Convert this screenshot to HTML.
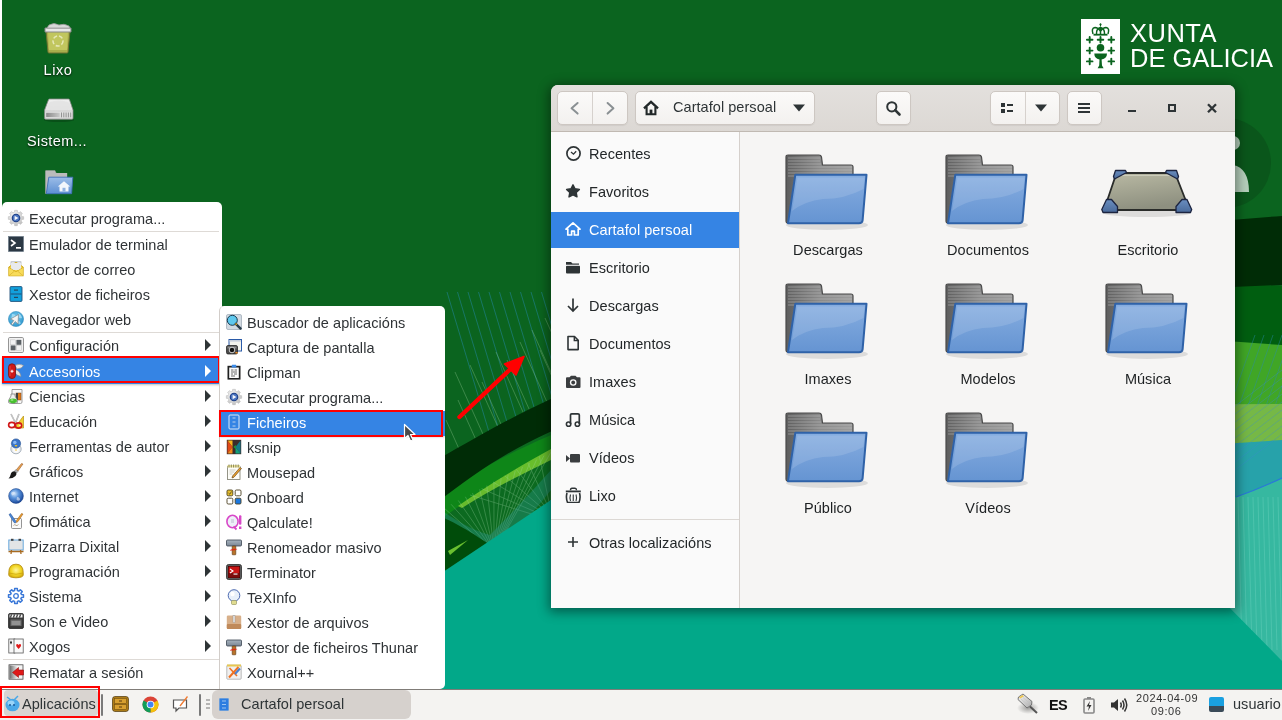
<!DOCTYPE html><html><head><meta charset="utf-8"><style>
*{margin:0;padding:0;box-sizing:border-box}
html,body{width:1282px;height:720px;overflow:hidden;background:#0b641f;font-family:"Liberation Sans",sans-serif}
#root{position:absolute;left:0;top:0;width:1282px;height:720px;overflow:hidden;will-change:transform}
.a{position:absolute}
.t{position:absolute;white-space:nowrap;font-size:14.5px;letter-spacing:0.05px;line-height:16px}
.menu{position:absolute;background:#fff;border:1px solid #cfcac5;border-radius:5px}
.ic{position:absolute;width:16px;height:16px;overflow:visible}
.mt{position:absolute;white-space:nowrap;font-size:14.5px;letter-spacing:0.05px;line-height:16px;color:#2f3336}
.arr{position:absolute;width:0;height:0;border-top:6px solid transparent;border-bottom:6px solid transparent;border-left:6px solid #2e3436}
.sep{position:absolute;height:1px;background:#dedad6}
#win{left:551px;top:85px;width:684px;height:523px;background:#f6f5f4;border-radius:7px 7px 0 0;box-shadow:0 2px 12px 2px rgba(0,0,0,.45)}
#hdr{left:0;top:0;width:684px;height:47px;background:linear-gradient(#e3e0dd,#dcd8d4);border-bottom:1px solid #c0b9b2;border-radius:7px 7px 0 0}
.btn{position:absolute;top:6px;height:34px;background:linear-gradient(#fbfaf9,#f3f1ef);border:1px solid #cdc7c2;border-radius:5px;box-shadow:0 1px 1px rgba(0,0,0,.06)}
#side{left:0;top:47px;width:189px;height:476px;background:#fafafa;border-right:1px solid #d5d0cc}
.st{position:absolute;left:38px;white-space:nowrap;font-size:14.5px;letter-spacing:0.05px;line-height:16px;color:#232729}
.lbl{position:absolute;width:160px;text-align:center;white-space:nowrap;font-size:14.5px;letter-spacing:0.05px;line-height:16px;color:#1d2022}
#task{left:0;top:689px;width:1282px;height:31px;background:#f4f3f1;border-top:1px solid #807c78}
.dl{position:absolute;width:100px;text-align:center;white-space:nowrap;font-size:14.5px;letter-spacing:0.05px;line-height:16px;color:#fff;text-shadow:0 1px 2px rgba(0,0,0,.9)}
</style></head><body><div id="root">
<svg class="a" style="left:0;top:0" width="1282" height="720" viewBox="0 0 1282 720">
<rect width="1282" height="720" fill="#0b641f"/>
<circle cx="1226" cy="163" r="45" fill="#0a561b"/>
<circle cx="1233" cy="143" r="7" fill="#b5cfbb"/>
<path d="M1214 192 Q1214 168 1233 165 Q1249 168 1249 192 Z" fill="#b5cfbb"/>
<!-- faint lines left -->
<g stroke="#1f8088" stroke-width="0.9" opacity="0.75" fill="none"><path d="M447.0 292 L500.4 470"/><path d="M457.5 292 L510.9 470"/><path d="M468.0 292 L521.4 470"/><path d="M478.5 292 L531.9 470"/><path d="M489.0 292 L542.4 470"/><path d="M499.5 292 L552.9 470"/><path d="M510.0 292 L563.4 470"/><path d="M520.5 292 L573.9 470"/><path d="M531.0 292 L584.4 470"/><path d="M541.5 292 L594.9 470"/><path d="M552.0 292 L605.4 470"/><path d="M562.5 292 L615.9 470"/></g>
<g stroke="#84be88" stroke-width="0.8" opacity="0.5" fill="none"><path d="M455.0 372 L503.6 480"/><path d="M470.0 365 L521.8 480"/><path d="M482.0 382 L526.1 480"/><path d="M496.0 352 L553.6 480"/><path d="M507.0 360 L561.0 480"/><path d="M520.0 342 L582.1 480"/><path d="M532.0 330 L599.5 480"/><path d="M545.0 318 L617.9 480"/><path d="M446.0 420 L473.0 480"/><path d="M458.0 400 L494.0 480"/><path d="M540.0 350 L598.5 480"/></g>
<!-- right strip layers -->
<path d="M1100 276 L1282 286 L1282 720 L1100 720Z" fill="#005e10"/>
<path d="M1100 332 L1282 345 L1282 720 L1100 720Z" fill="#40a626"/>
<g stroke="#2a8ab0" stroke-width="0.8" opacity="0.55"><path d="M1225 420 L1255 335"/><path d="M1234 420 L1264 335"/><path d="M1243 420 L1273 335"/><path d="M1252 420 L1282 335"/><path d="M1261 420 L1291 335"/><path d="M1270 420 L1300 335"/><path d="M1279 420 L1309 335"/></g>
<path d="M1100 405 L1282 404 L1282 720 L1100 720Z" fill="#76b846"/>
<path d="M1100 452 L1282 440 L1282 720 L1100 720Z" fill="#27a2aa"/>
<g stroke="#3a8ad0" stroke-width="0.7" opacity="0.5"><path d="M1230 410 L1282 370"/><path d="M1230 418 L1282 378"/><path d="M1230 426 L1282 386"/><path d="M1230 434 L1282 394"/><path d="M1230 442 L1282 402"/><path d="M1230 450 L1282 410"/><path d="M1230 458 L1282 418"/><path d="M1230 466 L1282 426"/><path d="M1230 474 L1282 434"/></g>
<path d="M1100 505 L1236 497 C1250 492 1265 486 1282 478 L1282 720 L1100 720Z" fill="#36b8a0"/>
<path d="M1236 497 C1250 492 1265 486 1282 478" stroke="#2a78d8" stroke-width="1.2" fill="none"/>
<g stroke="#6ad0bc" stroke-width="0.8" opacity="0.55"><path d="M1238 497 L1242 650"/><path d="M1243 497 L1247 650"/><path d="M1248 497 L1252 650"/><path d="M1253 497 L1257 650"/><path d="M1258 497 L1262 650"/><path d="M1263 497 L1267 650"/><path d="M1268 497 L1272 650"/><path d="M1273 497 L1277 650"/><path d="M1278 497 L1282 650"/></g>
<!-- left lower layers -->
<path d="M440 470 C520 440 600 415 700 390 L700 720 L440 720Z" fill="#0c6a20"/>
<path d="M440 495 C480 468 520 446 600 415 L600 440 C520 470 480 490 440 520Z" fill="#0e8618"/>
<path d="M551 449 L551 460 C520 475 490 490 462 508 L458 506 C490 484 520 466 551 449Z" fill="#78c830" opacity="0.85"/>
<g stroke="#a0d8a8" stroke-width="0.7" opacity="0.4" fill="none"><path d="M444.0 508.0 L494 552"/><path d="M451.1 504.3 L494 552"/><path d="M458.3 500.5 L494 552"/><path d="M465.4 496.8 L494 552"/><path d="M472.5 493.1 L494 552"/><path d="M479.7 489.3 L494 552"/><path d="M486.8 485.6 L494 552"/><path d="M493.9 481.9 L494 552"/><path d="M501.1 478.1 L494 552"/><path d="M508.2 474.4 L494 552"/><path d="M515.3 470.7 L494 552"/><path d="M522.5 466.9 L494 552"/><path d="M529.6 463.2 L494 552"/><path d="M536.7 459.5 L494 552"/><path d="M543.9 455.7 L494 552"/><path d="M551.0 452.0 L494 552"/><path d="M470.0 495.0 L551 520.0"/><path d="M481.6 488.6 L551 518.6"/><path d="M493.1 482.1 L551 517.1"/><path d="M504.7 475.7 L551 515.7"/><path d="M516.3 469.3 L551 514.3"/><path d="M527.9 462.9 L551 512.9"/><path d="M539.4 456.4 L551 511.4"/><path d="M551.0 450.0 L551 510.0"/></g>
<path d="M444 526 Q475 545 492 549 Q520 530 551 490 L551 470 Q520 505 490 535 Q470 530 444 512Z" fill="#2a9a98" opacity="0.35"/><g stroke="#2a90c8" stroke-width="0.8" opacity="0.7" fill="none"><path d="M444 530 Q480 552 494 551 Q525 528 551 500"/></g>
<path d="M444 518 C470 530 490 545 500 552 L444 574Z" fill="#004c0a"/>
<path d="M448 551 L468 540 L450 555Z" fill="#6ac030"/>
<!-- dark band -->
<path d="M440 458 C480 436 520 410 600 378 C800 305 1000 235 1282 216 L1282 285 C1000 295 800 345 600 412 C520 440 480 470 440 500 Z" fill="#002c06"/>
<!-- teal -->
<path d="M440 574 L551 500 L551 600 L1222 600 L1282 661 L1282 720 L440 720 Z" fill="#02a889"/>
</svg>
<div class="a" style="left:0;top:0;width:2px;height:720px;background:#fff"></div>
<svg class="a" style="left:42px;top:22px" width="32" height="32" viewBox="0 0 32 32">
<path d="M4 9 L28 9 L26 30 Q26 31 25 31 L7 31 Q6 31 6 30 Z" fill="#a9ae4c" stroke="#6f7330" stroke-width="1"/>
<path d="M6 10 L26 10 L25 28 L7 28Z" fill="#c1c65e"/>
<path d="M3 6 L29 6 L29 10 L3 10 Z" fill="#e8e8e8" stroke="#888" stroke-width="1"/>
<path d="M7 3 Q12 0 17 3 Q22 1 27 4 L28 6 L5 6Z" fill="#d8d8d8" stroke="#999" stroke-width=".8"/>
<circle cx="16" cy="19" r="5" fill="none" stroke="#e6e8b8" stroke-width="1.5" stroke-dasharray="4 2"/>
</svg>
<div class="dl" style="left:8px;top:62px;letter-spacing:0.6px">Lixo</div>
<svg class="a" style="left:42px;top:96px" width="32" height="32" viewBox="0 0 32 32">
<defs><linearGradient id="dvg" x1="0" y1="0" x2="0" y2="1"><stop offset="0" stop-color="#f0f0f0"/><stop offset="1" stop-color="#d8d8d8"/></linearGradient><linearGradient id="dvs" x1="0" y1="0" x2="1" y2="0"><stop offset="0" stop-color="#8a8a8a"/><stop offset="1" stop-color="#c8c8c8"/></linearGradient></defs>
<ellipse cx="17" cy="24" rx="15" ry="2" fill="rgba(0,0,0,.2)"/>
<path d="M7.5 3 L26.5 3 Q27.3 3 27.6 4 L31 14 L31 22.2 Q31 23.2 30 23.2 L3.6 23.2 Q2.6 23.2 2.6 22.2 L2.6 14 L6.4 4 Q6.7 3 7.5 3Z" fill="url(#dvg)" stroke="#8a8a8a" stroke-width=".8"/>
<ellipse cx="17" cy="10" rx="12" ry="5.5" fill="#e2e2e2" opacity=".8"/>
<path d="M3 15 H30.6" stroke="#c8c8c8" stroke-width=".8"/>
<rect x="4.2" y="16.8" width="13.5" height="4.2" fill="url(#dvs)"/>
<path d="M19.5 16.5 v4.8 M21.8 16.5 v4.8 M24.1 16.5 v4.8 M26.4 16.5 v4.8 M28.7 16.5 v4.8" stroke="#8a8a8a" stroke-width=".9"/>
</svg>
<div class="dl" style="left:7px;top:133px;letter-spacing:0.4px">Sistem...</div>
<svg class="a" style="left:42px;top:168px" width="32" height="32" viewBox="0 0 32 32">
<defs><linearGradient id="hf" x1="0" y1="0" x2="0" y2="1"><stop offset="0" stop-color="#9cbde8"/><stop offset="1" stop-color="#5d8fd2"/></linearGradient></defs>
<path d="M3.2 3 Q3.2 2.3 4 2.3 L13 2.3 L14.5 5 L25.2 5 L25.2 10 L5 25.7 L3.2 25.7Z" fill="#a8a8a8"/>
<path d="M4 4 h9 M4 6 h21 M4 8 h21 M4 10 h21 M4 12 h2 M4 14 h2 M4 16 h2 M4 18 h2 M4 20 h2 M4 22 h2" stroke="#d8d8d8" stroke-width=".8"/>
<path d="M6.8 9.2 L30.8 9.2 L29.6 25.7 L4.3 25.7Z" fill="url(#hf)" stroke="#3f6fb8" stroke-width=".9"/>
<path d="M22 13.2 L15.8 18.5 L17.5 18.5 L17.5 23.5 L26.5 23.5 L26.5 18.5 L28.2 18.5Z" fill="#f2f6fc"/>
<rect x="20.5" y="19.8" width="3" height="3.7" fill="#8fb2e0"/>
</svg>
<svg class="a" style="left:1081px;top:19px" width="39" height="55" viewBox="0 0 39 55">
<rect width="39" height="55" fill="#ffffff"/>
<g fill="none" stroke="#0b641f" stroke-width="1.5">
<path d="M12 15 Q10 9 14 8.5 Q17 8.5 19.5 12 Q22 8.5 25 8.5 Q29 9 27 15"/>
<path d="M15.5 15 Q15 10 19.5 8.5 Q24 10 23.5 15 M19.5 8.5 V15"/>
</g>
<rect x="12.5" y="14.8" width="14" height="1.8" fill="#0b641f"/>
<circle cx="19.5" cy="5.5" r="1.1" fill="#0b641f"/><path d="M19.5 4.5 V7.5" stroke="#0b641f" stroke-width="1"/>
<path d="M5.9 20.8 h5.6 M8.7 18.0 v5.6" stroke="#0b641f" stroke-width="1.9" stroke-linecap="round"/><path d="M16.7 20.8 h5.6 M19.5 18.0 v5.6" stroke="#0b641f" stroke-width="1.9" stroke-linecap="round"/><path d="M27.5 20.8 h5.6 M30.3 18.0 v5.6" stroke="#0b641f" stroke-width="1.9" stroke-linecap="round"/><path d="M5.9 31.6 h5.6 M8.7 28.8 v5.6" stroke="#0b641f" stroke-width="1.9" stroke-linecap="round"/><path d="M27.5 31.6 h5.6 M30.3 28.8 v5.6" stroke="#0b641f" stroke-width="1.9" stroke-linecap="round"/><path d="M5.9 42.4 h5.6 M8.7 39.6 v5.6" stroke="#0b641f" stroke-width="1.9" stroke-linecap="round"/><path d="M27.5 42.4 h5.6 M30.3 39.6 v5.6" stroke="#0b641f" stroke-width="1.9" stroke-linecap="round"/>
<circle cx="19.5" cy="28.7" r="3.8" fill="#0b641f"/>
<path d="M13.3 34.5 L26 34.5 Q26 39.5 20.6 40.5 L21 46.5 L22.6 49.3 L16.6 49.3 L18.2 46.5 L18.5 40.5 Q13.3 39.5 13.3 34.5Z" fill="#0b641f"/>
</svg>
<div class="a" style="left:1130px;top:19px;font-size:25.5px;line-height:28px;color:#fff;letter-spacing:0.5px;white-space:nowrap">XUNTA</div>
<div class="a" style="left:1130px;top:44px;font-size:25.5px;line-height:28px;color:#fff;letter-spacing:0px;white-space:nowrap">DE GALICIA</div>
<div id="win" class="a">
<div id="hdr" class="a"></div>
<div class="btn" style="left:6px;width:71px"></div>
<div class="a" style="left:41px;top:7px;width:1px;height:32px;background:#d6d1cd"></div>
<svg class="a" style="left:16px;top:15px" width="16" height="16" viewBox="0 0 16 16"><path d="M10.6 3 L4.6 8.3 L10.6 13.6" fill="none" stroke="#8a9093" stroke-width="2" stroke-linecap="round" stroke-linejoin="round"/></svg>
<svg class="a" style="left:51px;top:15px" width="16" height="16" viewBox="0 0 16 16"><path d="M5.6 3 L11.4 8.3 L5.6 13.6" fill="none" stroke="#8a9093" stroke-width="2" stroke-linecap="round" stroke-linejoin="round"/></svg>
<div class="btn" style="left:84px;width:180px"></div>
<svg class="a" style="left:92px;top:15px" width="16" height="16" viewBox="0 0 16 16"><path d="M1 8.3 L8 1.8 L15 8.3" fill="none" stroke="#222829" stroke-width="2.3" stroke-linejoin="miter"/><path d="M3.6 7 V14.2 H12.4 V7" fill="none" stroke="#222829" stroke-width="2.1"/><rect x="6.6" y="9.6" width="2.8" height="4.8" fill="#222829"/></svg>
<div class="t" style="left:122px;top:14px;color:#2e3436">Cartafol persoal</div>
<svg class="a" style="left:241px;top:18px" width="14" height="10" viewBox="0 0 14 10"><path d="M1 1.5 L13 1.5 L7 8.5Z" fill="#2e3436"/></svg>
<div class="btn" style="left:325px;width:35px"></div>
<svg class="a" style="left:334px;top:15px" width="17" height="17" viewBox="0 0 17 17"><circle cx="6.8" cy="6.8" r="4.6" fill="none" stroke="#2e3436" stroke-width="2"/><path d="M10.2 10.2 L14.5 14.5" stroke="#2e3436" stroke-width="2.6" stroke-linecap="round"/></svg>
<div class="btn" style="left:439px;width:70px"></div>
<div class="a" style="left:474px;top:7px;width:1px;height:32px;background:#d6d1cd"></div>
<svg class="a" style="left:448px;top:15px" width="16" height="16" viewBox="0 0 16 16"><rect x="2" y="3" width="4" height="4" fill="#2e3436"/><rect x="2" y="9" width="4" height="4" fill="#2e3436"/><rect x="8" y="4" width="6" height="2" fill="#2e3436"/><rect x="8" y="10" width="6" height="2" fill="#2e3436"/></svg>
<svg class="a" style="left:483px;top:18px" width="14" height="10" viewBox="0 0 14 10"><path d="M1 1.5 L13 1.5 L7 8.5Z" fill="#2e3436"/></svg>
<div class="btn" style="left:516px;width:35px"></div>
<svg class="a" style="left:525px;top:15px" width="16" height="16" viewBox="0 0 16 16"><rect x="2" y="3" width="12" height="2" fill="#2e3436"/><rect x="2" y="7" width="12" height="2" fill="#2e3436"/><rect x="2" y="11" width="12" height="2" fill="#2e3436"/></svg>
<div class="a" style="left:577px;top:25px;width:8px;height:2px;background:#2e3436"></div>
<div class="a" style="left:617px;top:19px;width:8px;height:8px;border:2px solid #2e3436"></div>
<svg class="a" style="left:654px;top:16px" width="14" height="14" viewBox="0 0 14 14"><path d="M3 3.2 L11 11.2 M11 3.2 L3 11.2" stroke="#2e3436" stroke-width="2.3"/></svg>
<div id="side" class="a"></div>
<svg class="a" style="left:14px;top:60px" width="16" height="16" viewBox="0 0 16 16"><circle cx="8.5" cy="8.5" r="6.6" fill="none" stroke="#2e3436" stroke-width="1.7"/><path d="M6 7 L8.5 9.2 L11.2 6.2" fill="none" stroke="#2e3436" stroke-width="1.3"/></svg>
<div class="st" style="top:61px;color:#232729">Recentes</div>
<svg class="a" style="left:14px;top:98px" width="16" height="16" viewBox="0 0 16 16"><path d="M8 1.8 L10 5.8 L14.4 6.4 L11.2 9.5 L12 13.9 L8 11.8 L4 13.9 L4.8 9.5 L1.6 6.4 L6 5.8Z" fill="#2e3436" stroke="#2e3436" stroke-width="1.4" stroke-linejoin="round"/></svg>
<div class="st" style="top:99px;color:#232729">Favoritos</div>
<div class="a" style="left:0;top:127px;width:188px;height:36px;background:#3584e4"></div>
<svg class="a" style="left:14px;top:136px" width="16" height="16" viewBox="0 0 16 16"><path d="M8 1.8 L1 8.2 L2.8 8.2 L2.8 14 L6.6 14 L6.6 10.2 L9.4 10.2 L9.4 14 L13.2 14 L13.2 8.2 L15 8.2 Z" fill="none" stroke="#fff" stroke-width="1.7" stroke-linejoin="round"/></svg>
<div class="st" style="top:137px;color:#ffffff">Cartafol persoal</div>
<svg class="a" style="left:14px;top:174px" width="16" height="16" viewBox="0 0 16 16"><path d="M1 3 L6 3 L7.5 4.5 L14 4.5 L14 6 L1 6Z" fill="#2e3436"/><rect x="1" y="6.5" width="14" height="8" rx="1" fill="#2e3436"/><path d="M1 6.2 L15 6.2" stroke="#fafafa" stroke-width=".9"/></svg>
<div class="st" style="top:175px;color:#232729">Escritorio</div>
<svg class="a" style="left:14px;top:212px" width="16" height="16" viewBox="0 0 16 16"><path d="M8 1.5 L8 14 M3 9 L8 14 L13 9" fill="none" stroke="#2e3436" stroke-width="1.7"/></svg>
<div class="st" style="top:213px;color:#232729">Descargas</div>
<svg class="a" style="left:14px;top:250px" width="16" height="16" viewBox="0 0 16 16"><path d="M3 1.5 L9.5 1.5 L13.2 5.2 L13.2 14.6 L3 14.6Z" fill="none" stroke="#2e3436" stroke-width="1.6" stroke-linejoin="round"/><path d="M9.3 1.5 L9.3 5.5 L13.2 5.5" fill="none" stroke="#2e3436" stroke-width="1.4"/></svg>
<div class="st" style="top:251px;color:#232729">Documentos</div>
<svg class="a" style="left:14px;top:288px" width="16" height="16" viewBox="0 0 16 16"><path d="M1 5.2 Q1 4.2 2 4.2 L4.5 4.2 L6 2.8 L10.5 2.8 L12 4.2 L14.5 4.2 Q15.5 4.2 15.5 5.2 L15.5 14 Q15.5 15 14.5 15 L2 15 Q1 15 1 14Z" fill="#3a3d3f"/><circle cx="8.2" cy="9.5" r="3.3" fill="#fafafa"/><circle cx="8.2" cy="9.5" r="1.9" fill="#3a3d3f"/></svg>
<div class="st" style="top:289px;color:#232729">Imaxes</div>
<svg class="a" style="left:14px;top:326px" width="16" height="16" viewBox="0 0 16 16"><path d="M5.5 13 L5.5 4 Q5.5 2.8 6.8 2.8 L13 2.8 Q14.3 2.8 14.3 4 L14.3 13" fill="none" stroke="#2e3436" stroke-width="1.7"/><circle cx="3.6" cy="13.2" r="2.2" fill="none" stroke="#2e3436" stroke-width="1.6"/><circle cx="12.4" cy="13.2" r="2.2" fill="none" stroke="#2e3436" stroke-width="1.6"/></svg>
<div class="st" style="top:327px;color:#232729">Música</div>
<svg class="a" style="left:14px;top:364px" width="16" height="16" viewBox="0 0 16 16"><path d="M1 5.9 L5 9.5 L1 13.1Z" fill="#3a3d3f"/><rect x="5" y="5" width="10" height="8.6" rx="1" fill="#3a3d3f"/></svg>
<div class="st" style="top:365px;color:#232729">Vídeos</div>
<svg class="a" style="left:14px;top:402px" width="16" height="16" viewBox="0 0 16 16"><path d="M5.5 3.2 Q5.5 1.3 7 1.3 L10 1.3 Q11.5 1.3 11.5 3.2" fill="none" stroke="#2e3436" stroke-width="1.4"/><rect x="0.8" y="3.5" width="15" height="1.8" fill="#2e3436"/><path d="M2 6 Q0.6 11 2.6 15.6 L13.9 15.6 Q15.9 11 14.5 6" fill="none" stroke="#2e3436" stroke-width="1.6"/><path d="M5.5 7.5 Q4.5 10.5 5.5 14 M8.25 7.5 V14 M11 7.5 Q12 10.5 11 14" fill="none" stroke="#2e3436" stroke-width="1.1"/></svg>
<div class="st" style="top:403px;color:#232729">Lixo</div>
<div class="a" style="left:0;top:434px;width:188px;height:1px;background:#dcd8d4"></div>
<svg class="a" style="left:14px;top:449px" width="16" height="16" viewBox="0 0 16 16"><path d="M8 3 L8 13 M3 8 L13 8" stroke="#2e3436" stroke-width="1.6"/></svg>
<div class="st" style="top:450px">Otras localizacións</div>
<svg class="a" style="left:232px;top:68px" width="90" height="82" viewBox="0 0 90 82"><defs><linearGradient id="fg232_68" x1="0" y1="0" x2="0" y2="1"><stop offset="0" stop-color="#86ade0"/><stop offset="1" stop-color="#6594d2"/></linearGradient><linearGradient id="bg232_68" x1="0" y1="0" x2="1" y2="0"><stop offset="0" stop-color="#5e5e5e"/><stop offset="0.5" stop-color="#8a8a8a"/><stop offset="1" stop-color="#9c9c9c"/></linearGradient></defs><ellipse cx="44" cy="72" rx="41" ry="5" fill="rgba(0,0,0,0.10)"/><path d="M3 4 Q3 2 5 2 L36 2 Q38 2 38.5 4 L39.5 12 L68 12 Q70 12 70 14 L70 25 L10 70 L5 70 Q3 70 3 68Z" fill="url(#bg232_68)" stroke="#4a4a4a" stroke-width="1.2"/><path d="M5 5 h32 M5 8 h32 M5 11 h33 M5 14 h64 M5 17 h64 M5 20 h64 M5 23 h64" stroke="#c4c4c4" stroke-width=".9" opacity=".55"/><path d="M12.3 21.8 L83.5 21.8 L79.6 67.3 Q79.2 70.2 76 70.2 L5 70.2 Z" fill="url(#fg232_68)" stroke="#2f62a8" stroke-width="2" stroke-linejoin="round"/><path d="M14.5 24.5 L81.5 24.5 L80.5 36 Q62 46 40 46 Q22 48 9 58Z" fill="#ffffff" opacity=".13"/></svg>
<div class="lbl" style="left:197px;top:157px">Descargas</div>
<svg class="a" style="left:392px;top:68px" width="90" height="82" viewBox="0 0 90 82"><defs><linearGradient id="fg392_68" x1="0" y1="0" x2="0" y2="1"><stop offset="0" stop-color="#86ade0"/><stop offset="1" stop-color="#6594d2"/></linearGradient><linearGradient id="bg392_68" x1="0" y1="0" x2="1" y2="0"><stop offset="0" stop-color="#5e5e5e"/><stop offset="0.5" stop-color="#8a8a8a"/><stop offset="1" stop-color="#9c9c9c"/></linearGradient></defs><ellipse cx="44" cy="72" rx="41" ry="5" fill="rgba(0,0,0,0.10)"/><path d="M3 4 Q3 2 5 2 L36 2 Q38 2 38.5 4 L39.5 12 L68 12 Q70 12 70 14 L70 25 L10 70 L5 70 Q3 70 3 68Z" fill="url(#bg392_68)" stroke="#4a4a4a" stroke-width="1.2"/><path d="M5 5 h32 M5 8 h32 M5 11 h33 M5 14 h64 M5 17 h64 M5 20 h64 M5 23 h64" stroke="#c4c4c4" stroke-width=".9" opacity=".55"/><path d="M12.3 21.8 L83.5 21.8 L79.6 67.3 Q79.2 70.2 76 70.2 L5 70.2 Z" fill="url(#fg392_68)" stroke="#2f62a8" stroke-width="2" stroke-linejoin="round"/><path d="M14.5 24.5 L81.5 24.5 L80.5 36 Q62 46 40 46 Q22 48 9 58Z" fill="#ffffff" opacity=".13"/></svg>
<div class="lbl" style="left:357px;top:157px">Documentos</div>
<svg class="a" style="left:550px;top:84px" width="92" height="50" viewBox="0 0 92 50">
<defs><linearGradient id="dg" x1="0" y1="0" x2="0.3" y2="1"><stop offset="0" stop-color="#babaa4"/><stop offset="1" stop-color="#8e9080"/></linearGradient>
<linearGradient id="cg" x1="0" y1="0" x2="0" y2="1"><stop offset="0" stop-color="#6a8ec0"/><stop offset="1" stop-color="#4a6a9a"/></linearGradient></defs>
<ellipse cx="46" cy="44" rx="44" ry="4" fill="rgba(0,0,0,.10)"/>
<path d="M15.5 4 L74 4 L88.5 41 L3 41Z" fill="url(#dg)" stroke="#2a2c2a" stroke-width="1.8" stroke-linejoin="round"/>
<path d="M17 6.5 L72.5 6.5" stroke="#d8d8c8" stroke-width="1" opacity=".7"/>
<path d="M14.5 1.5 L24.5 1.5 L25.5 3.5 L13.5 10 L12.5 7.5Z" fill="url(#cg)" stroke="#1c2440" stroke-width="1.3" stroke-linejoin="round"/>
<path d="M75.5 1.5 L65.5 1.5 L64.5 3.5 L76.5 10 L77.5 7.5Z" fill="url(#cg)" stroke="#1c2440" stroke-width="1.3" stroke-linejoin="round"/>
<path d="M2 43.5 L16.5 43.5 L16.5 37.5 L10.5 30.5 L5.5 30.5 L0.8 40.5Z" fill="url(#cg)" stroke="#1c2440" stroke-width="1.3" stroke-linejoin="round"/>
<path d="M89.5 43.5 L75 43.5 L75 37.5 L81 30.5 L86 30.5 L90.7 40.5Z" fill="url(#cg)" stroke="#1c2440" stroke-width="1.3" stroke-linejoin="round"/>
</svg>
<div class="lbl" style="left:517px;top:157px">Escritorio</div>
<svg class="a" style="left:232px;top:197px" width="90" height="82" viewBox="0 0 90 82"><defs><linearGradient id="fg232_197" x1="0" y1="0" x2="0" y2="1"><stop offset="0" stop-color="#86ade0"/><stop offset="1" stop-color="#6594d2"/></linearGradient><linearGradient id="bg232_197" x1="0" y1="0" x2="1" y2="0"><stop offset="0" stop-color="#5e5e5e"/><stop offset="0.5" stop-color="#8a8a8a"/><stop offset="1" stop-color="#9c9c9c"/></linearGradient></defs><ellipse cx="44" cy="72" rx="41" ry="5" fill="rgba(0,0,0,0.10)"/><path d="M3 4 Q3 2 5 2 L36 2 Q38 2 38.5 4 L39.5 12 L68 12 Q70 12 70 14 L70 25 L10 70 L5 70 Q3 70 3 68Z" fill="url(#bg232_197)" stroke="#4a4a4a" stroke-width="1.2"/><path d="M5 5 h32 M5 8 h32 M5 11 h33 M5 14 h64 M5 17 h64 M5 20 h64 M5 23 h64" stroke="#c4c4c4" stroke-width=".9" opacity=".55"/><path d="M12.3 21.8 L83.5 21.8 L79.6 67.3 Q79.2 70.2 76 70.2 L5 70.2 Z" fill="url(#fg232_197)" stroke="#2f62a8" stroke-width="2" stroke-linejoin="round"/><path d="M14.5 24.5 L81.5 24.5 L80.5 36 Q62 46 40 46 Q22 48 9 58Z" fill="#ffffff" opacity=".13"/></svg>
<div class="lbl" style="left:197px;top:286px">Imaxes</div>
<svg class="a" style="left:392px;top:197px" width="90" height="82" viewBox="0 0 90 82"><defs><linearGradient id="fg392_197" x1="0" y1="0" x2="0" y2="1"><stop offset="0" stop-color="#86ade0"/><stop offset="1" stop-color="#6594d2"/></linearGradient><linearGradient id="bg392_197" x1="0" y1="0" x2="1" y2="0"><stop offset="0" stop-color="#5e5e5e"/><stop offset="0.5" stop-color="#8a8a8a"/><stop offset="1" stop-color="#9c9c9c"/></linearGradient></defs><ellipse cx="44" cy="72" rx="41" ry="5" fill="rgba(0,0,0,0.10)"/><path d="M3 4 Q3 2 5 2 L36 2 Q38 2 38.5 4 L39.5 12 L68 12 Q70 12 70 14 L70 25 L10 70 L5 70 Q3 70 3 68Z" fill="url(#bg392_197)" stroke="#4a4a4a" stroke-width="1.2"/><path d="M5 5 h32 M5 8 h32 M5 11 h33 M5 14 h64 M5 17 h64 M5 20 h64 M5 23 h64" stroke="#c4c4c4" stroke-width=".9" opacity=".55"/><path d="M12.3 21.8 L83.5 21.8 L79.6 67.3 Q79.2 70.2 76 70.2 L5 70.2 Z" fill="url(#fg392_197)" stroke="#2f62a8" stroke-width="2" stroke-linejoin="round"/><path d="M14.5 24.5 L81.5 24.5 L80.5 36 Q62 46 40 46 Q22 48 9 58Z" fill="#ffffff" opacity=".13"/></svg>
<div class="lbl" style="left:357px;top:286px">Modelos</div>
<svg class="a" style="left:552px;top:197px" width="90" height="82" viewBox="0 0 90 82"><defs><linearGradient id="fg552_197" x1="0" y1="0" x2="0" y2="1"><stop offset="0" stop-color="#86ade0"/><stop offset="1" stop-color="#6594d2"/></linearGradient><linearGradient id="bg552_197" x1="0" y1="0" x2="1" y2="0"><stop offset="0" stop-color="#5e5e5e"/><stop offset="0.5" stop-color="#8a8a8a"/><stop offset="1" stop-color="#9c9c9c"/></linearGradient></defs><ellipse cx="44" cy="72" rx="41" ry="5" fill="rgba(0,0,0,0.10)"/><path d="M3 4 Q3 2 5 2 L36 2 Q38 2 38.5 4 L39.5 12 L68 12 Q70 12 70 14 L70 25 L10 70 L5 70 Q3 70 3 68Z" fill="url(#bg552_197)" stroke="#4a4a4a" stroke-width="1.2"/><path d="M5 5 h32 M5 8 h32 M5 11 h33 M5 14 h64 M5 17 h64 M5 20 h64 M5 23 h64" stroke="#c4c4c4" stroke-width=".9" opacity=".55"/><path d="M12.3 21.8 L83.5 21.8 L79.6 67.3 Q79.2 70.2 76 70.2 L5 70.2 Z" fill="url(#fg552_197)" stroke="#2f62a8" stroke-width="2" stroke-linejoin="round"/><path d="M14.5 24.5 L81.5 24.5 L80.5 36 Q62 46 40 46 Q22 48 9 58Z" fill="#ffffff" opacity=".13"/></svg>
<div class="lbl" style="left:517px;top:286px">Música</div>
<svg class="a" style="left:232px;top:326px" width="90" height="82" viewBox="0 0 90 82"><defs><linearGradient id="fg232_326" x1="0" y1="0" x2="0" y2="1"><stop offset="0" stop-color="#86ade0"/><stop offset="1" stop-color="#6594d2"/></linearGradient><linearGradient id="bg232_326" x1="0" y1="0" x2="1" y2="0"><stop offset="0" stop-color="#5e5e5e"/><stop offset="0.5" stop-color="#8a8a8a"/><stop offset="1" stop-color="#9c9c9c"/></linearGradient></defs><ellipse cx="44" cy="72" rx="41" ry="5" fill="rgba(0,0,0,0.10)"/><path d="M3 4 Q3 2 5 2 L36 2 Q38 2 38.5 4 L39.5 12 L68 12 Q70 12 70 14 L70 25 L10 70 L5 70 Q3 70 3 68Z" fill="url(#bg232_326)" stroke="#4a4a4a" stroke-width="1.2"/><path d="M5 5 h32 M5 8 h32 M5 11 h33 M5 14 h64 M5 17 h64 M5 20 h64 M5 23 h64" stroke="#c4c4c4" stroke-width=".9" opacity=".55"/><path d="M12.3 21.8 L83.5 21.8 L79.6 67.3 Q79.2 70.2 76 70.2 L5 70.2 Z" fill="url(#fg232_326)" stroke="#2f62a8" stroke-width="2" stroke-linejoin="round"/><path d="M14.5 24.5 L81.5 24.5 L80.5 36 Q62 46 40 46 Q22 48 9 58Z" fill="#ffffff" opacity=".13"/></svg>
<div class="lbl" style="left:197px;top:415px">Público</div>
<svg class="a" style="left:392px;top:326px" width="90" height="82" viewBox="0 0 90 82"><defs><linearGradient id="fg392_326" x1="0" y1="0" x2="0" y2="1"><stop offset="0" stop-color="#86ade0"/><stop offset="1" stop-color="#6594d2"/></linearGradient><linearGradient id="bg392_326" x1="0" y1="0" x2="1" y2="0"><stop offset="0" stop-color="#5e5e5e"/><stop offset="0.5" stop-color="#8a8a8a"/><stop offset="1" stop-color="#9c9c9c"/></linearGradient></defs><ellipse cx="44" cy="72" rx="41" ry="5" fill="rgba(0,0,0,0.10)"/><path d="M3 4 Q3 2 5 2 L36 2 Q38 2 38.5 4 L39.5 12 L68 12 Q70 12 70 14 L70 25 L10 70 L5 70 Q3 70 3 68Z" fill="url(#bg392_326)" stroke="#4a4a4a" stroke-width="1.2"/><path d="M5 5 h32 M5 8 h32 M5 11 h33 M5 14 h64 M5 17 h64 M5 20 h64 M5 23 h64" stroke="#c4c4c4" stroke-width=".9" opacity=".55"/><path d="M12.3 21.8 L83.5 21.8 L79.6 67.3 Q79.2 70.2 76 70.2 L5 70.2 Z" fill="url(#fg392_326)" stroke="#2f62a8" stroke-width="2" stroke-linejoin="round"/><path d="M14.5 24.5 L81.5 24.5 L80.5 36 Q62 46 40 46 Q22 48 9 58Z" fill="#ffffff" opacity=".13"/></svg>
<div class="lbl" style="left:357px;top:415px">Vídeos</div>
</div>
<div class="menu" style="left:2px;top:202px;width:220px;height:487px;border:none;border-radius:5px 5px 0 0"></div>
<div class="sep" style="left:3px;top:231px;width:216px"></div>
<div class="sep" style="left:3px;top:332px;width:216px"></div>
<div class="sep" style="left:3px;top:659px;width:216px"></div>
<svg class="ic" style="left:8px;top:210px" viewBox="0 0 16 16"><defs><radialGradient id="rg1" cx=".4" cy=".35" r=".7"><stop offset="0" stop-color="#fafafa"/><stop offset="1" stop-color="#bdbdbd"/></radialGradient></defs><path d="M13.80 6.48 L15.68 6.63 L15.68 9.37 L13.80 9.52 L13.18 11.03 L14.40 12.46 L12.46 14.40 L11.03 13.18 L9.52 13.80 L9.37 15.68 L6.63 15.68 L6.48 13.80 L4.97 13.18 L3.54 14.40 L1.60 12.46 L2.82 11.03 L2.20 9.52 L0.32 9.37 L0.32 6.63 L2.20 6.48 L2.82 4.97 L1.60 3.54 L3.54 1.60 L4.97 2.82 L6.48 2.20 L6.63 0.32 L9.37 0.32 L9.52 2.20 L11.03 2.82 L12.46 1.60 L14.40 3.54 L13.18 4.97Z" fill="url(#rg1)" stroke="#b8b8b8" stroke-width=".5"/><circle cx="8" cy="8" r="4.3" fill="#1f3f86"/><circle cx="8" cy="8" r="3.2" fill="#4a74c0"/><path d="M6.6 5.8 L10.4 8 L6.6 10.2 Z" fill="#f4f6fa"/></svg>
<div class="mt" style="left:29px;top:211px;color:#2f3336">Executar programa...</div>
<svg class="ic" style="left:8px;top:236px" viewBox="0 0 16 16"><rect x="0.5" y="0.5" width="15" height="15" fill="#2b3844" stroke="#6c7a86" stroke-width=".7"/><path d="M3 4 L7 7 L3 10" fill="none" stroke="#fff" stroke-width="1.6"/><rect x="8" y="11" width="5" height="1.7" fill="#fff"/></svg>
<div class="mt" style="left:29px;top:237px;color:#2f3336">Emulador de terminal</div>
<svg class="ic" style="left:8px;top:261px" viewBox="0 0 16 16"><rect x="3" y="0.8" width="10" height="9" fill="#e8eaee" stroke="#9aa0a8" stroke-width=".6"/><path d="M0.8 6 L8 1.2 L15.2 6 L15.2 14.8 L0.8 14.8Z" fill="#f6d44a" stroke="#d0a818" stroke-width=".9" stroke-linejoin="round"/><rect x="3" y="2" width="10" height="7" fill="#e8eaee"/><path d="M0.8 6.5 L8 11 L15.2 6.5 M0.8 14.8 L6.5 9.8 M15.2 14.8 L9.5 9.8" fill="none" stroke="#d0a818" stroke-width=".9"/><path d="M1.2 7 L8 11.2 L14.8 7 L14.8 14.5 L1.2 14.5Z" fill="#f8dc5a"/><path d="M1.2 14.5 L6.5 10 M14.8 14.5 L9.5 10" stroke="#d8b030" stroke-width=".7"/></svg>
<div class="mt" style="left:29px;top:262px;color:#2f3336">Lector de correo</div>
<svg class="ic" style="left:8px;top:286px" viewBox="0 0 16 16"><rect x="2" y="0.6" width="12" height="14.8" rx="1" fill="#12a0dc" stroke="#1f4f78" stroke-width=".9"/><path d="M2.5 8 L13.5 8" stroke="#1f4f78" stroke-width="1"/><rect x="6" y="3.5" width="4" height="1.2" fill="#24485e"/><rect x="6" y="10.8" width="4" height="1.2" fill="#24485e"/></svg>
<div class="mt" style="left:29px;top:287px;color:#2f3336">Xestor de ficheiros</div>
<svg class="ic" style="left:8px;top:311px" viewBox="0 0 16 16"><defs><radialGradient id="rg2" cx=".45" cy=".4" r=".6"><stop offset="0" stop-color="#7fd0f2"/><stop offset="1" stop-color="#2e96cc"/></radialGradient></defs><circle cx="8" cy="8" r="7.6" fill="url(#rg2)" stroke="#2a86b8" stroke-width=".5"/><path d="M4 3 Q7 2.5 7.5 5 Q6 7.5 3.5 7Z M10 2 Q13.5 3.5 14 7 Q12 8 10.5 6Z M10 10 Q13 10 12.5 13 Q10.5 14 9.5 12Z" fill="#a8e0f8" opacity=".8"/><path d="M10.5 3.5 L10 13 L7.2 10.5 L4.5 14 L3.2 13 L5.8 9.5 L2.5 8Z" fill="#f4f4f4" stroke="#7a7a7a" stroke-width=".6" stroke-linejoin="round"/></svg>
<div class="mt" style="left:29px;top:312px;color:#2f3336">Navegador web</div>
<svg class="ic" style="left:8px;top:337px" viewBox="0 0 16 16"><rect x="0.6" y="0.6" width="14.8" height="14.8" rx="1" fill="#fdfdfd" stroke="#8a8a8a" stroke-width="1"/><rect x="2.6" y="2.8" width="5" height="5" fill="#f2f2f2" stroke="#c0c0c0" stroke-width=".6"/><rect x="8.4" y="2.8" width="5" height="5" fill="#5a6064"/><rect x="2.6" y="8.4" width="5" height="5" fill="#5a6064"/><rect x="8.4" y="8.4" width="5" height="5" fill="#f2f2f2" stroke="#c0c0c0" stroke-width=".6"/></svg>
<div class="mt" style="left:29px;top:338px;color:#2f3336">Configuración</div>
<div class="arr" style="left:205px;top:339px;border-left-color:#2e3436"></div>
<div class="a" style="left:2px;top:357px;width:219px;height:27px;background:#3584e4;box-shadow:0 1px 2px rgba(0,0,0,.25)"></div>
<svg class="ic" style="left:8px;top:363px" viewBox="0 0 16 16"><path d="M7 2.5 Q11 0 15.5 2.5 Q14 5.5 9 6 Z" fill="#ececec" stroke="#8a8a8a" stroke-width=".6"/><path d="M7 6.5 Q12 7.5 13 13.5 Q9.5 13 7 10Z" fill="#e4e4e4" stroke="#8a8a8a" stroke-width=".6"/><rect x="0.5" y="0.8" width="7" height="14.8" rx="3.5" fill="#d01818" stroke="#801010" stroke-width=".8"/><path d="M2.5 8.2 h3 M4 6.7 v3" stroke="#fff" stroke-width="1.1"/><path d="M2 3 L2 13" stroke="#f06060" stroke-width=".6"/></svg>
<div class="mt" style="left:29px;top:364px;color:#ffffff">Accesorios</div>
<div class="arr" style="left:205px;top:365px;border-left-color:#ffffff"></div>
<svg class="ic" style="left:8px;top:388px" viewBox="0 0 16 16"><path d="M4 1.5 L14 1.5 L14 14 Q14 15.5 12.5 15.5 L5.5 15.5 Q4 15.5 4 14Z" fill="#f4f4f4" fill-opacity=".6" stroke="#8a8a8a" stroke-width=".8"/><rect x="8" y="5" width="5" height="7" fill="#e07818" stroke="#7a4010" stroke-width=".5"/><rect x="8" y="5" width="2" height="7" fill="#404040"/><path d="M3 6 L7 6 L7 8 L9.5 12.5 Q10 15.5 7.5 15.5 L2.5 15.5 Q0 15.5 0.5 12.5 L3 8Z" fill="#f0f0f0" stroke="#707070" stroke-width=".7"/><ellipse cx="5" cy="12.8" rx="4" ry="2.4" fill="#48c030"/><ellipse cx="4" cy="12" rx="1.5" ry=".8" fill="#a8f090"/></svg>
<div class="mt" style="left:29px;top:389px;color:#2f3336">Ciencias</div>
<div class="arr" style="left:205px;top:390px;border-left-color:#2e3436"></div>
<svg class="ic" style="left:8px;top:413px" viewBox="0 0 16 16"><path d="M6.5 15 L15.5 15 L15.5 3 Z" fill="#f2d030" stroke="#b89010" stroke-width=".7"/><path d="M10.5 13 L13.5 13 L13.5 9.5Z" fill="#fff6b8"/><path d="M7.5 10 L3 1 M7.5 10 L11 1" stroke="#a8a8a8" stroke-width="1.6"/><path d="M7.5 10 L3 1 M7.5 10 L11 1" stroke="#e0e0e0" stroke-width=".6"/><ellipse cx="3.8" cy="12" rx="3.2" ry="2.6" fill="none" stroke="#d01818" stroke-width="1.6"/><ellipse cx="10.5" cy="12.5" rx="3.2" ry="2.6" fill="none" stroke="#d01818" stroke-width="1.6"/></svg>
<div class="mt" style="left:29px;top:414px;color:#2f3336">Educación</div>
<div class="arr" style="left:205px;top:415px;border-left-color:#2e3436"></div>
<svg class="ic" style="left:8px;top:438px" viewBox="0 0 16 16"><ellipse cx="8" cy="11" rx="5.2" ry="4.8" fill="#e8ecf0" stroke="#8a96a4" stroke-width=".7"/><ellipse cx="8" cy="11.5" rx="3" ry="3.5" fill="#fafafa"/><circle cx="8" cy="5.5" r="4.6" fill="#3a74c8" stroke="#1f4a8a" stroke-width=".6"/><circle cx="6.8" cy="4.5" r="1.8" fill="#8ab8f0"/><path d="M6.5 7 L9.5 7 L8 9Z" fill="#f0c020"/><circle cx="8" cy="12" r=".8" fill="#f0c020"/></svg>
<div class="mt" style="left:29px;top:439px;color:#2f3336">Ferramentas de autor</div>
<div class="arr" style="left:205px;top:440px;border-left-color:#2e3436"></div>
<svg class="ic" style="left:8px;top:463px" viewBox="0 0 16 16"><path d="M15 1 L13.5 0.5 L8.5 6.5 L10 8Z" fill="#e8a050" stroke="#8a5020" stroke-width=".5"/><path d="M8 6.5 L10 8.5 L8.5 10 L6.5 8Z" fill="#b0b0b0" stroke="#606060" stroke-width=".5"/><path d="M6.5 8.2 Q3 8.5 2.5 12 Q2 14 0.5 15.5 Q5 15.5 7.5 13 Q9 11 8.3 9.8Z" fill="#1a1a1a"/></svg>
<div class="mt" style="left:29px;top:464px;color:#2f3336">Gráficos</div>
<div class="arr" style="left:205px;top:465px;border-left-color:#2e3436"></div>
<svg class="ic" style="left:8px;top:488px" viewBox="0 0 16 16"><defs><radialGradient id="rg3" cx=".4" cy=".35" r=".65"><stop offset="0" stop-color="#cfe4fa"/><stop offset=".45" stop-color="#5a94dc"/><stop offset="1" stop-color="#1c4a9c"/></radialGradient></defs><circle cx="8" cy="8" r="7.4" fill="url(#rg3)" stroke="#1a3f80" stroke-width=".5"/><path d="M3 5 Q5 3 7 4.5 Q6 7 4 7.5Z M9 9 Q12 9 12 12 Q9.5 13.5 8.5 11.5Z" fill="#f4f8ff" opacity=".55"/></svg>
<div class="mt" style="left:29px;top:489px;color:#2f3336">Internet</div>
<div class="arr" style="left:205px;top:490px;border-left-color:#2e3436"></div>
<svg class="ic" style="left:8px;top:513px" viewBox="0 0 16 16"><rect x="3.5" y="5.5" width="10" height="10" rx="1" fill="#fafafa" stroke="#7a7a7a" stroke-width=".8"/><path d="M5.5 12.5 Q7 10.5 8 12.5 Q9 13 10.5 11.5" fill="none" stroke="#9a8a6a" stroke-width=".7"/><path d="M1 1.5 L2.5 0.5 L8 8.5 L7.5 10 L6 9.5Z" fill="#4a86d8" stroke="#1f4a8a" stroke-width=".5"/><path d="M15 1 L13.5 0.5 L8.5 7.5 L8.5 9.5 L10 8.5Z" fill="#f0a030" stroke="#8a5010" stroke-width=".5"/></svg>
<div class="mt" style="left:29px;top:514px;color:#2f3336">Ofimática</div>
<div class="arr" style="left:205px;top:515px;border-left-color:#2e3436"></div>
<svg class="ic" style="left:8px;top:538px" viewBox="0 0 16 16"><rect x="0.8" y="2" width="14.4" height="10" fill="#e2e4e6" stroke="#6aa8dc" stroke-width="1"/><rect x="3" y="0.8" width="2.5" height="2" fill="#404040"/><rect x="10.5" y="0.8" width="2.5" height="2" fill="#404040"/><path d="M0.5 13.5 L15.5 13.5 M3.5 12 L3 16 M12.5 12 L13 16" stroke="#a86a20" stroke-width="1.3"/></svg>
<div class="mt" style="left:29px;top:539px;color:#2f3336">Pizarra Dixital</div>
<div class="arr" style="left:205px;top:540px;border-left-color:#2e3436"></div>
<svg class="ic" style="left:8px;top:563px" viewBox="0 0 16 16"><defs><radialGradient id="rg4" cx=".5" cy=".45" r=".55"><stop offset="0" stop-color="#fff6a0"/><stop offset=".6" stop-color="#f2d828"/><stop offset="1" stop-color="#d8b010"/></radialGradient></defs><path d="M0.8 9.5 Q0.8 1.2 8 1.2 Q15.2 1.2 15.2 9.5 L15.2 12 Q15.2 14.5 8 14.8 Q0.8 14.5 0.8 12Z" fill="url(#rg4)" stroke="#b89010" stroke-width=".9"/><path d="M1 10 Q8 12.5 15 10" fill="none" stroke="#c8a010" stroke-width=".7"/></svg>
<div class="mt" style="left:29px;top:564px;color:#2f3336">Programación</div>
<div class="arr" style="left:205px;top:565px;border-left-color:#2e3436"></div>
<svg class="ic" style="left:8px;top:588px" viewBox="0 0 16 16"><path d="M13.42 6.58 L15.48 6.66 L15.48 9.34 L13.42 9.42 L12.84 10.82 L14.24 12.35 L12.35 14.24 L10.82 12.84 L9.42 13.42 L9.34 15.48 L6.66 15.48 L6.58 13.42 L5.18 12.84 L3.65 14.24 L1.76 12.35 L3.16 10.82 L2.58 9.42 L0.52 9.34 L0.52 6.66 L2.58 6.58 L3.16 5.18 L1.76 3.65 L3.65 1.76 L5.18 3.16 L6.58 2.58 L6.66 0.52 L9.34 0.52 L9.42 2.58 L10.82 3.16 L12.35 1.76 L14.24 3.65 L12.84 5.18Z" fill="#ffffff" stroke="#3a78d8" stroke-width="1.5" stroke-linejoin="round"/><circle cx="8" cy="8" r="2.3" fill="#fff" stroke="#3a78d8" stroke-width="1.3"/></svg>
<div class="mt" style="left:29px;top:589px;color:#2f3336">Sistema</div>
<div class="arr" style="left:205px;top:590px;border-left-color:#2e3436"></div>
<svg class="ic" style="left:8px;top:613px" viewBox="0 0 16 16"><rect x="0.6" y="0.6" width="14.8" height="14.8" rx="1.2" fill="#3a3a3a" stroke="#1a1a1a" stroke-width=".8"/><rect x="1.5" y="1.5" width="13" height="3" fill="#f4f4f4"/><path d="M3.5 1.5 L2.5 4.5 M6.5 1.5 L5.5 4.5 M9.5 1.5 L8.5 4.5 M12.5 1.5 L11.5 4.5" stroke="#2a2a2a" stroke-width="1.1"/><rect x="2.5" y="6.5" width="11" height="6.5" fill="#6a6a6a"/><path d="M3.5 9 h9 M3.5 11 h9" stroke="#cfcfcf" stroke-width=".8"/></svg>
<div class="mt" style="left:29px;top:614px;color:#2f3336">Son e Video</div>
<div class="arr" style="left:205px;top:615px;border-left-color:#2e3436"></div>
<svg class="ic" style="left:8px;top:638px" viewBox="0 0 16 16"><rect x="0.8" y="1" width="6" height="14" fill="#f8f8f8" stroke="#5a5a5a" stroke-width=".8"/><rect x="6" y="1" width="9.2" height="14" fill="#fafafa" stroke="#5a5a5a" stroke-width=".8"/><path d="M3 2.5 L4 4.5 L3 6.5 L2 4.5Z" fill="#1a1a1a"/><path d="M10.6 7 Q9.5 5.5 8.3 6.5 Q7.5 8 10.6 11 Q13.7 8 12.9 6.5 Q11.7 5.5 10.6 7Z" fill="#e01818"/></svg>
<div class="mt" style="left:29px;top:639px;color:#2f3336">Xogos</div>
<div class="arr" style="left:205px;top:640px;border-left-color:#2e3436"></div>
<svg class="ic" style="left:8px;top:664px" viewBox="0 0 16 16"><defs><linearGradient id="lg1" x1="0" y1="0" x2="1" y2="0"><stop offset="0" stop-color="#6a6a6a"/><stop offset="1" stop-color="#e8e8e8"/></linearGradient></defs><rect x="1" y="0.8" width="14" height="14.4" fill="#f4f4f4" stroke="#4a4a4a" stroke-width=".8"/><path d="M1.5 1.2 L9 2.5 L9 15 L1.5 14.8Z" fill="url(#lg1)"/><path d="M15.5 6 L10.5 6 L10.5 3.5 L4.5 8.5 L10.5 13.5 L10.5 11 L15.5 11Z" fill="#e01818" stroke="#901010" stroke-width=".6" stroke-linejoin="round"/></svg>
<div class="mt" style="left:29px;top:665px;color:#2f3336">Rematar a sesión</div>
<div class="a" style="left:2px;top:356px;width:218px;height:27px;border:2px solid #ff0000"></div>
<div class="menu" style="left:219px;top:306px;width:226px;height:383px;border:none;border-left:1px solid #d2cdc9;border-radius:5px 5px 5px 0"></div>
<svg class="ic" style="left:226px;top:314px" viewBox="0 0 16 16"><rect x="0.5" y="0.5" width="15" height="15" rx="1.5" fill="#d2dae2" stroke="#9aa6b2" stroke-width=".7"/><circle cx="6.3" cy="6.3" r="5" fill="#5ec8ee" stroke="#15384e" stroke-width="1"/><path d="M9.8 9.8 L14.6 14.6" stroke="#263a4a" stroke-width="2.4" stroke-linecap="round"/><path d="M9.5 9.5 L10.8 10.8" stroke="#e0a818" stroke-width="1.4"/></svg>
<div class="mt" style="left:247px;top:315px;color:#2f3336">Buscador de aplicacións</div>
<svg class="ic" style="left:226px;top:339px" viewBox="0 0 16 16"><rect x="3" y="0.5" width="12.5" height="11.5" fill="#f4f4ee" stroke="#2a5aa8" stroke-width="1"/><rect x="3.5" y="1" width="11.5" height="1.6" fill="#c8d0dc"/><rect x="0.5" y="6.5" width="11" height="8.5" rx="1.5" fill="#4a4a4a" stroke="#1a1a1a" stroke-width=".7"/><rect x="1.5" y="7.5" width="9" height="2" fill="#8a8a8a"/><circle cx="6" cy="11" r="2.8" fill="#111" stroke="#e0e0e0" stroke-width=".9"/><rect x="9.5" y="13" width="2" height="1.5" fill="#f08a20"/></svg>
<div class="mt" style="left:247px;top:340px;color:#2f3336">Captura de pantalla</div>
<svg class="ic" style="left:226px;top:364px" viewBox="0 0 16 16"><rect x="1.5" y="1.8" width="13" height="13.8" fill="#202020"/><rect x="3.2" y="3.5" width="9.6" height="10.5" fill="#fafafa"/><path d="M6 0.8 L10 0.8 L10.5 3.5 L5.5 3.5Z" fill="#3a8ae8"/><path d="M5 6 h2.5 M8.5 6 h2.5 M5 8 h6 M5 10 h2 M8 10 h3 M5 12 h4" stroke="#5a5a5a" stroke-width=".9"/></svg>
<div class="mt" style="left:247px;top:365px;color:#2f3336">Clipman</div>
<svg class="ic" style="left:226px;top:389px" viewBox="0 0 16 16"><defs><radialGradient id="rg1" cx=".4" cy=".35" r=".7"><stop offset="0" stop-color="#fafafa"/><stop offset="1" stop-color="#bdbdbd"/></radialGradient></defs><path d="M13.80 6.48 L15.68 6.63 L15.68 9.37 L13.80 9.52 L13.18 11.03 L14.40 12.46 L12.46 14.40 L11.03 13.18 L9.52 13.80 L9.37 15.68 L6.63 15.68 L6.48 13.80 L4.97 13.18 L3.54 14.40 L1.60 12.46 L2.82 11.03 L2.20 9.52 L0.32 9.37 L0.32 6.63 L2.20 6.48 L2.82 4.97 L1.60 3.54 L3.54 1.60 L4.97 2.82 L6.48 2.20 L6.63 0.32 L9.37 0.32 L9.52 2.20 L11.03 2.82 L12.46 1.60 L14.40 3.54 L13.18 4.97Z" fill="url(#rg1)" stroke="#b8b8b8" stroke-width=".5"/><circle cx="8" cy="8" r="4.3" fill="#1f3f86"/><circle cx="8" cy="8" r="3.2" fill="#4a74c0"/><path d="M6.6 5.8 L10.4 8 L6.6 10.2 Z" fill="#f4f6fa"/></svg>
<div class="mt" style="left:247px;top:390px;color:#2f3336">Executar programa...</div>
<div class="a" style="left:220px;top:411px;width:225px;height:25px;background:#3584e4;box-shadow:0 1px 2px rgba(0,0,0,.25)"></div>
<svg class="ic" style="left:226px;top:414px" viewBox="0 0 16 16"><rect x="3" y="1" width="10" height="14" rx="1" fill="#3584e4" stroke="#dce8f8" stroke-width="1"/><path d="M6.5 4 h3 M6.5 8 h3 M6.5 12 h3" stroke="#bcd0ea" stroke-width="1"/></svg>
<div class="mt" style="left:247px;top:415px;color:#fff">Ficheiros</div>
<svg class="ic" style="left:226px;top:439px" viewBox="0 0 16 16"><rect x="0.8" y="0.8" width="14.4" height="14.4" fill="#3c2c2a"/><path d="M1.5 1.5 L6.5 1.5 L6.5 8 Z" fill="#f6b418"/><path d="M1.5 1.5 L6.5 8 L1.5 14.5Z" fill="#e24a1a"/><path d="M6.5 8 L6.5 14.5 L1.5 14.5Z" fill="#f28a18"/><path d="M14.5 1.5 L9.5 8 L14.5 14.5Z" fill="#137a8c"/><path d="M9.5 8 L14.5 14.5 L9.5 14.5Z" fill="#12a07a"/><path d="M7.5 8 L9.8 6 L9.8 10Z" fill="#1aa040"/></svg>
<div class="mt" style="left:247px;top:440px;color:#2f3336">ksnip</div>
<svg class="ic" style="left:226px;top:464px" viewBox="0 0 16 16"><rect x="1.5" y="2.5" width="12.5" height="13" fill="#fdfdf8" stroke="#7a7a6a" stroke-width=".8"/><rect x="1.5" y="1" width="12.5" height="2.5" fill="#f2e8a0"/><path d="M3 0.5 v3 M5.3 0.5 v3 M7.6 0.5 v3 M9.9 0.5 v3 M12.2 0.5 v3" stroke="#6a6a40" stroke-width=".8"/><path d="M15.5 4.5 L14 3.5 L6.5 12 L6 14 L8 13.2Z" fill="#e8a030" stroke="#5a3a10" stroke-width=".6"/><path d="M3.5 6 h6 M3.5 8 h5 M3.5 10 h3" stroke="#b0b0a0" stroke-width=".6"/></svg>
<div class="mt" style="left:247px;top:465px;color:#2f3336">Mousepad</div>
<svg class="ic" style="left:226px;top:489px" viewBox="0 0 16 16"><rect x="1" y="1" width="5.8" height="5.8" rx="1.2" fill="#e8c030" stroke="#4a4020" stroke-width=".9"/><path d="M2.5 4 L3.8 5.2 L5.5 2.5" fill="none" stroke="#4a4020" stroke-width=".8"/><rect x="9.2" y="1" width="5.8" height="5.8" rx="1.2" fill="#fff" stroke="#4a4020" stroke-width=".9"/><rect x="1" y="9.2" width="5.8" height="5.8" rx="1.2" fill="#fff" stroke="#4a4020" stroke-width=".9"/><rect x="9.2" y="9.2" width="5.8" height="5.8" rx="1.2" fill="#1a78e0" stroke="#4a4020" stroke-width=".9"/></svg>
<div class="mt" style="left:247px;top:490px;color:#2f3336">Onboard</div>
<svg class="ic" style="left:226px;top:514px" viewBox="0 0 16 16"><ellipse cx="6.5" cy="7.5" rx="5.6" ry="6.2" fill="#eef0f8" stroke="#d848c8" stroke-width="1.6"/><path d="M7.5 12.5 L10.5 15.5" stroke="#d848c8" stroke-width="1.8"/><rect x="13" y="1.2" width="2.4" height="9.5" rx="1" fill="#d848c8"/><rect x="13" y="12.5" width="2.4" height="2.5" fill="#d848c8"/><path d="M5 6 h3 M5 8 h3" stroke="#8888a8" stroke-width=".5"/></svg>
<div class="mt" style="left:247px;top:515px;color:#2f3336">Qalculate!</div>
<svg class="ic" style="left:226px;top:539px" viewBox="0 0 16 16"><defs><linearGradient id="lg2" x1="0" y1="0" x2="0" y2="1"><stop offset="0" stop-color="#a8b4c0"/><stop offset="1" stop-color="#7a8694"/></linearGradient></defs><rect x="0.5" y="1" width="15" height="6" rx="1" fill="url(#lg2)" stroke="#3a4450" stroke-width=".8"/><rect x="6.2" y="7" width="3.6" height="8.8" rx=".6" fill="#b8742a" stroke="#5a3410" stroke-width=".6"/><path d="M4 11 Q8 9 11.5 10 Q8 12 4 11.5Z" fill="#e02818"/></svg>
<div class="mt" style="left:247px;top:540px;color:#2f3336">Renomeador masivo</div>
<svg class="ic" style="left:226px;top:564px" viewBox="0 0 16 16"><rect x="0.5" y="0.5" width="15" height="15" rx="2" fill="#5a5a5a" stroke="#2a2a2a" stroke-width=".8"/><rect x="2" y="2" width="12" height="12" fill="#1a0000"/><rect x="2.5" y="2.5" width="11" height="11" fill="#c81414"/><rect x="2.5" y="9" width="11" height="4.5" fill="#5a0808" opacity=".7"/><path d="M4 5 L7 7 L4 9" fill="none" stroke="#fff" stroke-width="1.1"/><rect x="7.5" y="9.5" width="4" height="1.1" fill="#fff"/></svg>
<div class="mt" style="left:247px;top:565px;color:#2f3336">Terminator</div>
<svg class="ic" style="left:226px;top:589px" viewBox="0 0 16 16"><circle cx="8" cy="6.5" r="5.8" fill="#e8f0fa" stroke="#3a5aa8" stroke-width=".9"/><circle cx="6.5" cy="5" r="2.2" fill="#fff"/><rect x="5.5" y="11.5" width="5" height="4" rx="1" fill="#e0dc90" stroke="#8a8a50" stroke-width=".6"/></svg>
<div class="mt" style="left:247px;top:590px;color:#2f3336">TeXInfo</div>
<svg class="ic" style="left:226px;top:614px" viewBox="0 0 16 16"><rect x="0.8" y="1.5" width="14.4" height="13.5" rx="1.2" fill="#d8b08a"/><rect x="0.8" y="10" width="14.4" height="5" rx="1" fill="#c08a5a"/><rect x="7" y="1.5" width="2" height="7" fill="#e8e8e8" stroke="#8a8a8a" stroke-width=".4"/></svg>
<div class="mt" style="left:247px;top:615px;color:#2f3336">Xestor de arquivos</div>
<svg class="ic" style="left:226px;top:639px" viewBox="0 0 16 16"><defs><linearGradient id="lg2" x1="0" y1="0" x2="0" y2="1"><stop offset="0" stop-color="#a8b4c0"/><stop offset="1" stop-color="#7a8694"/></linearGradient></defs><rect x="0.5" y="1" width="15" height="6" rx="1" fill="url(#lg2)" stroke="#3a4450" stroke-width=".8"/><rect x="6.2" y="7" width="3.6" height="8.8" rx=".6" fill="#b8742a" stroke="#5a3410" stroke-width=".6"/><path d="M4 11 Q8 9 11.5 10 Q8 12 4 11.5Z" fill="#e02818"/></svg>
<div class="mt" style="left:247px;top:640px;color:#2f3336">Xestor de ficheiros Thunar</div>
<svg class="ic" style="left:226px;top:664px" viewBox="0 0 16 16"><rect x="0.8" y="1.2" width="14.4" height="14" rx=".8" fill="#f0f0f0" stroke="#a0a0a0" stroke-width=".7"/><rect x="1" y="0.5" width="14" height="2" fill="#e8c850"/><path d="M3 13.5 L12.5 3" stroke="#f07020" stroke-width="2"/><path d="M3.5 4 L11 12" stroke="#f07020" stroke-width="1.6"/><path d="M9 10 L14 4.5" stroke="#4a82d0" stroke-width="2"/></svg>
<div class="mt" style="left:247px;top:665px;color:#2f3336">Xournal++</div>
<div class="a" style="left:219px;top:410px;width:224px;height:27px;border:2px solid #ff0000"></div>
<svg class="a" style="left:440px;top:340px" width="100" height="90" viewBox="440 340 100 90">
<path d="M459.5 417 L511 368.5" stroke="#ff0000" stroke-width="4.4" stroke-linecap="round"/>
<path d="M524 356.5 L504.5 364 L516 375 Z" fill="#ff0000" stroke="#ff0000" stroke-width="1.6" stroke-linejoin="round"/>
</svg>
<div id="task" class="a"></div>
<div class="a" style="left:4px;top:690px;width:94px;height:26px;background:#d9d4d0;border-radius:4px"></div>
<svg class="a" style="left:4px;top:694px" width="17" height="18" viewBox="0 0 17 18"><ellipse cx="8.5" cy="11" rx="7" ry="6.3" fill="#4aa8e8"/><ellipse cx="7" cy="9" rx="3.5" ry="2.5" fill="#9ad4f8"/><path d="M3 3 L7 6 M14 2 L10 6" stroke="#4aa8e8" stroke-width="1.5"/><circle cx="6" cy="11" r="1" fill="#1a5a9a"/><circle cx="10" cy="11" r="1" fill="#1a5a9a"/></svg>
<div class="t" style="left:22px;top:696px;color:#2e3436">Aplicacións</div>
<div class="a" style="left:0px;top:686px;width:100px;height:32px;border:2px solid #ff0000"></div>
<div class="a" style="left:101px;top:694px;width:2px;height:22px;background:#7a7a7a;border-radius:1px"></div>
<svg class="a" style="left:112px;top:696px" width="17" height="16" viewBox="0 0 17 16"><rect x="0.7" y="0.7" width="15.6" height="14.6" rx="2" fill="#c08a18" stroke="#5a4010" stroke-width="1"/><rect x="2.5" y="2.5" width="12" height="5" fill="#d8a030" stroke="#6a4a10" stroke-width=".6"/><rect x="2.5" y="8.5" width="12" height="5" fill="#d8a030" stroke="#6a4a10" stroke-width=".6"/><rect x="7" y="4.5" width="3" height="1" fill="#5a3a10"/><rect x="7" y="10.5" width="3" height="1" fill="#5a3a10"/></svg>
<svg class="a" style="left:142px;top:696px" width="17" height="17" viewBox="0 0 16 16"><circle cx="8" cy="8" r="7.5" fill="#db4437"/><path d="M8 8 L14.5 4.25 A7.5 7.5 0 0 1 8 15.5Z" fill="#f4c20d"/><path d="M8 8 L8 15.5 A7.5 7.5 0 0 1 1.5 4.25Z" fill="#0f9d58"/><circle cx="8" cy="8" r="3.6" fill="#fff"/><circle cx="8" cy="8" r="2.8" fill="#4285f4"/></svg>
<svg class="a" style="left:172px;top:695px" width="18" height="18" viewBox="0 0 18 18"><path d="M1.5 5 L14.5 5 L14.5 13 L7 13 L4 16 L4 13 L1.5 13Z" fill="#fff" stroke="#555" stroke-width="1.2"/><path d="M8 11 L15.5 1.5" stroke="#f07a30" stroke-width="1.3"/></svg>
<div class="a" style="left:199px;top:694px;width:2px;height:22px;background:#7a7a7a;border-radius:1px"></div>
<svg class="a" style="left:205px;top:698px" width="6" height="12" viewBox="0 0 6 12"><path d="M1 2 h4 M1 6 h4 M1 10 h4" stroke="#777" stroke-width="1"/></svg>
<div class="a" style="left:212px;top:690px;width:199px;height:29px;background:#d6d1cd;border-radius:6px"></div>
<svg class="a" style="left:219px;top:698px" width="10" height="13" viewBox="0 0 10 13"><rect x="0" y="0" width="10" height="13" fill="#2d7de0" stroke="#f4e8d0" stroke-width=".6"/><path d="M3 3 h4 M3 6.5 h4 M3 10 h4" stroke="#9cc4f0" stroke-width="1"/></svg>
<div class="t" style="left:241px;top:696px;color:#2e3436">Cartafol persoal</div>
<svg class="a" style="left:1016px;top:693px" width="24" height="22" viewBox="0 0 24 22"><defs><linearGradient id="ng" x1="0" y1="0" x2="1" y2="1"><stop offset="0" stop-color="#fafafa"/><stop offset="1" stop-color="#a8a8a8"/></linearGradient><radialGradient id="nsh" cx=".5" cy=".5" r=".5"><stop offset="0" stop-color="rgba(0,0,0,.35)"/><stop offset="1" stop-color="rgba(0,0,0,0)"/></radialGradient></defs><ellipse cx="12" cy="15" rx="11" ry="6" fill="url(#nsh)"/><path d="M14 13.5 L21 20" stroke="#555" stroke-width="2"/><path d="M2.5 4 L7 1 L16 8.5 L15.5 12 L11 15 L2 6.5Z" fill="url(#ng)" stroke="#6a6a6a" stroke-width="0.9" stroke-linejoin="round"/><path d="M3 4.2 L6.5 2 L8 3.3 L4.3 5.6Z" fill="#f0c850"/><path d="M5 6 L13 13 M7 4.5 L14.5 11" stroke="#c0c0c0" stroke-width=".6"/></svg>
<div class="a" style="left:1049px;top:696px;font-size:14.5px;font-weight:bold;line-height:18px;letter-spacing:-0.6px;color:#111;white-space:nowrap">ES</div>
<svg class="a" style="left:1082px;top:696px" width="14" height="18" viewBox="0 0 14 18"><rect x="2" y="3" width="10" height="14" rx="1" fill="none" stroke="#888" stroke-width="1.6"/><rect x="5" y="1" width="4" height="2" fill="#888"/><path d="M8 5 L4.5 10.5 L7 10.5 L6 15 L9.5 9 L7 9Z" fill="#333"/></svg>
<svg class="a" style="left:1110px;top:697px" width="18" height="16" viewBox="0 0 18 16"><path d="M1 5.5 L4 5.5 L8 2 L8 14 L4 10.5 L1 10.5Z" fill="#333"/><path d="M10.5 5.5 Q12 8 10.5 10.5 M12.5 3.5 Q15.5 8 12.5 12.5 M14.5 1.5 Q19 8 14.5 14.5" fill="none" stroke="#333" stroke-width="1.5"/></svg>
<div class="a" style="left:1136px;top:692px;font-size:11px;letter-spacing:.6px;line-height:13px;color:#333;white-space:nowrap">2024-04-09</div>
<div class="a" style="left:1151px;top:705px;font-size:11px;letter-spacing:.6px;line-height:13px;color:#333;white-space:nowrap">09:06</div>
<div class="a" style="left:1209px;top:697px;width:15px;height:15px;border-radius:2px;background:linear-gradient(#1aa0e0 0,#1aa0e0 62%,#3a4a58 62%)"></div>
<div class="t" style="left:1233px;top:696px;color:#2e3436">usuario</div>
<svg class="a" style="left:403px;top:423px" width="14" height="20" viewBox="0 0 14 20"><path d="M1.5 1.5 L1.5 15.5 L5 12.5 L7.5 18 L10 17 L7.5 11.5 L12 11.5Z" fill="#4a4a4a" stroke="#fff" stroke-width="1.2" stroke-linejoin="round"/></svg>
</div></body></html>
